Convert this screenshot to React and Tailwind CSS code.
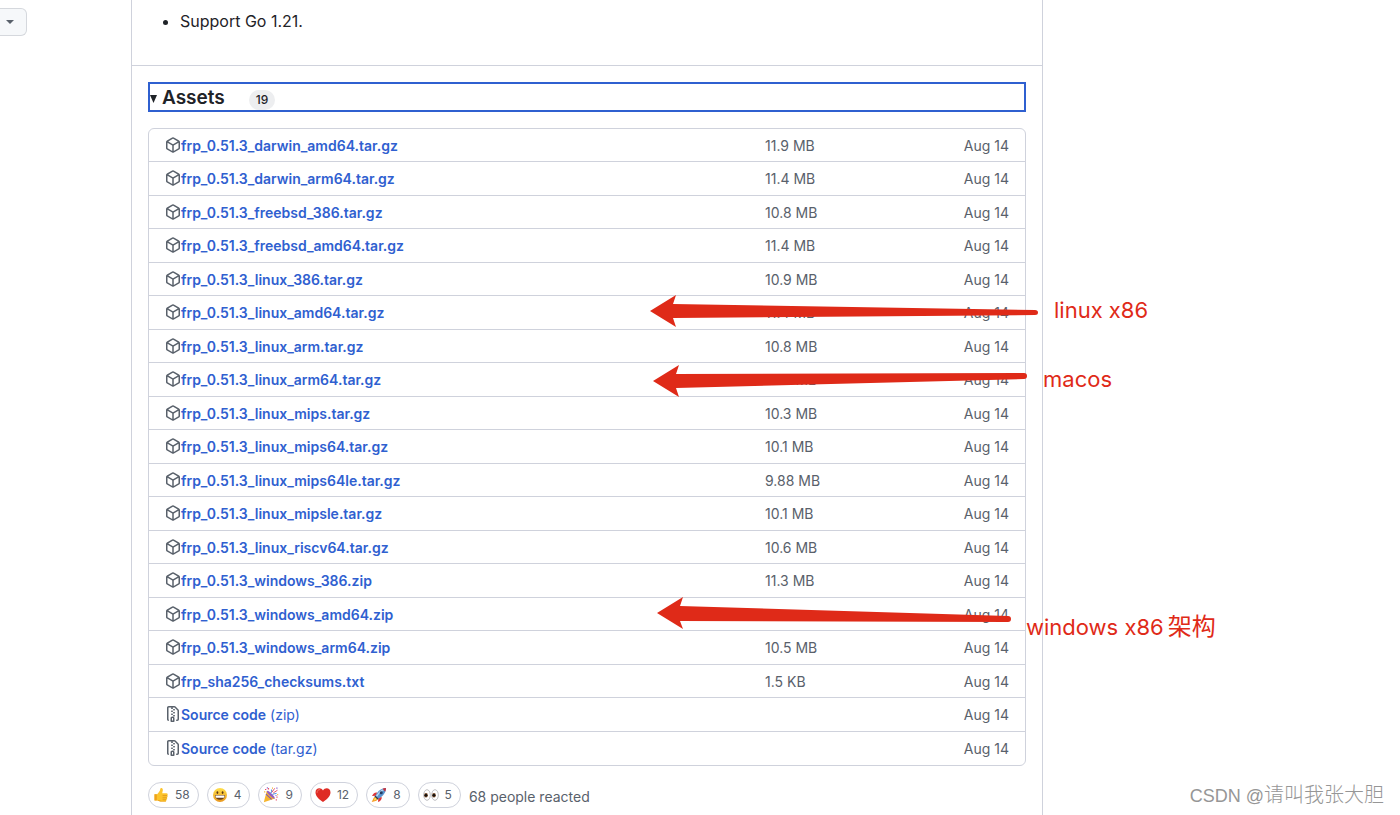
import React from "react";

const assets = [
  { name: "frp_0.51.3_darwin_amd64.tar.gz", size: "11.9 MB" },
  { name: "frp_0.51.3_darwin_arm64.tar.gz", size: "11.4 MB" },
  { name: "frp_0.51.3_freebsd_386.tar.gz", size: "10.8 MB" },
  { name: "frp_0.51.3_freebsd_amd64.tar.gz", size: "11.4 MB" },
  { name: "frp_0.51.3_linux_386.tar.gz", size: "10.9 MB" },
  { name: "frp_0.51.3_linux_amd64.tar.gz", size: "11.4 MB" },
  { name: "frp_0.51.3_linux_arm.tar.gz", size: "10.8 MB" },
  { name: "frp_0.51.3_linux_arm64.tar.gz", size: "10.5 MB" },
  { name: "frp_0.51.3_linux_mips.tar.gz", size: "10.3 MB" },
  { name: "frp_0.51.3_linux_mips64.tar.gz", size: "10.1 MB" },
  { name: "frp_0.51.3_linux_mips64le.tar.gz", size: "9.88 MB" },
  { name: "frp_0.51.3_linux_mipsle.tar.gz", size: "10.1 MB" },
  { name: "frp_0.51.3_linux_riscv64.tar.gz", size: "10.6 MB" },
  { name: "frp_0.51.3_windows_386.zip", size: "11.3 MB" },
  { name: "frp_0.51.3_windows_amd64.zip", size: "" },
  { name: "frp_0.51.3_windows_arm64.zip", size: "10.5 MB" },
  { name: "frp_sha256_checksums.txt", size: "1.5 KB" },
  { name: "Source code", format: "(zip)", size: "" },
  { name: "Source code", format: "(tar.gz)", size: "" },
];

const PackageIcon = () => (
  <svg viewBox="0 0 16 16" className="w-4 h-4 mb-0.5 shrink-0 fill-[#59616b]" aria-hidden="true">
    <path d="m8.878.392 5.25 3.045c.54.314.872.89.872 1.514v6.098a1.75 1.75 0 0 1-.872 1.514l-5.25 3.045a1.75 1.75 0 0 1-1.756 0l-5.25-3.045A1.75 1.75 0 0 1 1 11.049V4.951c0-.624.332-1.201.872-1.514L7.122.392a1.75 1.75 0 0 1 1.756 0ZM7.875 1.69l-4.63 2.685L8 7.133l4.755-2.758-4.63-2.685a.248.248 0 0 0-.25 0ZM2.5 5.677v5.372c0 .09.047.171.125.216l4.625 2.683V8.432Zm6.25 8.271 4.625-2.683a.25.25 0 0 0 .125-.216V5.677L8.75 8.432Z" />
  </svg>
);

const ZipIcon = () => (
  <svg viewBox="0 0 16 16" className="w-4 h-4 mb-0.5 shrink-0 fill-[#59616b]" aria-hidden="true">
    <path d="M3.5 1.75v11.5c0 .09.048.173.126.217a.75.75 0 0 1-.752 1.298A1.748 1.748 0 0 1 2 13.25V1.75C2 .784 2.784 0 3.75 0h5.586c.464 0 .909.185 1.237.513l2.914 2.914c.329.328.513.773.513 1.237v8.586A1.75 1.75 0 0 1 12.25 15h-.5a.75.75 0 0 1 0-1.5h.5a.25.25 0 0 0 .25-.25V4.664a.25.25 0 0 0-.073-.177L9.513 1.573a.25.25 0 0 0-.177-.073H7.25a.75.75 0 0 1 0 1.5h-.5a.75.75 0 0 1 0-1.5h-3a.25.25 0 0 0-.25.25Zm3.75 8.75h.5c.966 0 1.75.784 1.75 1.75v3a.75.75 0 0 1-.75.75h-2.5a.75.75 0 0 1-.75-.75v-3c0-.966.784-1.75 1.75-1.75ZM6 5.25a.75.75 0 0 1 .75-.75h.5a.75.75 0 0 1 0 1.5h-.5A.75.75 0 0 1 6 5.25Zm.75 2.25h.5a.75.75 0 0 1 0 1.5h-.5a.75.75 0 0 1 0-1.5ZM8 6.75A.75.75 0 0 1 8.75 6h.5a.75.75 0 0 1 0 1.5h-.5A.75.75 0 0 1 8 6.75ZM8.75 3h.5a.75.75 0 0 1 0 1.5h-.5a.75.75 0 0 1 0-1.5ZM8 9.75A.75.75 0 0 1 8.75 9h.5a.75.75 0 0 1 0 1.5h-.5A.75.75 0 0 1 8 9.75Zm-1 2.5v2.25h1v-2.25a.25.25 0 0 0-.25-.25h-.5a.25.25 0 0 0-.25.25Z" />
  </svg>
);

const ThumbsUp = () => (
  <svg viewBox="0 0 16 16" className="w-4 h-4" aria-hidden="true">
    <path d="M1.5 7.2h2.6c.9-.7 2.1-2.3 2.8-3.7.4-.9.2-2.3 1.2-2.5 1.3-.2 1.9 1.1 1.7 2.5-.1 1-.6 2-.6 2.7h4.2c1.5 0 1.8 1.9.6 2.3.9.5.8 1.9-.2 2.2.7.6.4 1.8-.5 2 .3.9-.3 1.8-1.4 1.8H7.5c-1.4 0-2.2-.6-3.4-.9H1.5Z" fill="#fcc42c" />
    <path d="M10 8.6h4M9.9 10.8h3.6M10 12.8h2.7" stroke="#d98d14" strokeWidth=".7" strokeLinecap="round" />
    <path d="M1.5 7.2h2.3v6.4H1.5ZM4 13.3c1.3.3 2 1.2 3.5 1.2h4.4c.6 0 1-.3 1.3-.6-2.5.4-5.5.2-7-.8Z" fill="#eda21d" />
  </svg>
);

const Grin = () => (
  <svg viewBox="0 0 16 16" className="w-4 h-4" aria-hidden="true">
    <defs>
      <linearGradient id="face" x1="0" y1="0" x2="0" y2="1">
        <stop offset="0" stopColor="#ffe04a" />
        <stop offset="1" stopColor="#e8971f" />
      </linearGradient>
    </defs>
    <circle cx="8" cy="8" r="7" fill="url(#face)" />
    <ellipse cx="5.4" cy="5.6" rx=".9" ry="1.3" fill="#5c3614" />
    <ellipse cx="10.6" cy="5.6" rx=".9" ry="1.3" fill="#5c3614" />
    <path d="M3 8h10c0 3-2 4.700-5 4.700S3 11 3 8Z" fill="#69401c" />
    <path d="M3.5 8.400h9c0 1-.2 1.700-.7 2.400H4.200c-.5-.7-.7-1.400-.7-2.400Z" fill="#fff" />
  </svg>
);

const Party = () => (
  <svg viewBox="0 0 16 16" className="w-4 h-4" aria-hidden="true">
    <path d="M3.7 4 .8 15.3 12 11.5Z" fill="#f5b52e" />
    <path d="m3 7.2 5.600 5.2" stroke="#8352b5" strokeWidth="1.1" />
    <ellipse cx="7.8" cy="7.7" rx="1.3" ry="5.3" transform="rotate(-45 7.8 7.7)" fill="#9560c2" />
    <path d="M7.5 6c1.800-1.100 1.400-2.400.7-3.300M9.500 7.800c1.300-2 2.700-.2 4-1.600" stroke="#5598df" strokeWidth="1.100" fill="none" />
    <path d="m9 5.200 2.700-3.900M10.300 5.900l4.200-2.700" stroke="#e65970" strokeWidth="1" />
    <path d="M2 2.5h1.300M5.500 1v1.400M14 9.500v1.300M12.700 12.800h1.200" stroke="#e8506a" strokeWidth="1.200" />
    <path d="M3.800.8h1.100M13.300 1.200h1.200M12.500 8.500h1" stroke="#8560d2" strokeWidth="1.200" />
    <path d="M1.100 4.800h1.200M9 1.200h1M14.200 7.600h1" stroke="#f3b52e" strokeWidth="1.200" />
  </svg>
);

const Heart = () => (
  <svg viewBox="0 0 16 16" className="w-4 h-4" aria-hidden="true">
    <path d="M8 15C4.300 12.400.5 9.100.5 5.400.5.700 6.100 0 8 3.600 9.900 0 15.500.7 15.500 5.400 15.500 9.100 11.700 12.400 8 15Z" fill="#df2c25" />
    <path d="M2.100 5.400c0-1.900 1.200-2.800 2.600-2.800" stroke="#f4756b" strokeWidth=".9" fill="none" strokeLinecap="round" />
  </svg>
);

const Rocket = () => (
  <svg viewBox="0 0 16 16" className="w-4 h-4" aria-hidden="true">
    <path d="M4.400 9.800C2.200 10 2.800 12 .7 14.900c3.100-.9 5.300-.5 5.700-3Z" fill="#f59a23" />
    <path d="M4.500 10.800c-1.100.2-1.100 1.300-1.900 2.500 1.500-.4 2.700-.4 3-1.400Z" fill="#fce256" />
    <path d="M6.300 5.500C3.800 5 2 6.600 1 9.100l3.800-.4ZM10.600 9.700c.6 2.400-1 4.300-3.600 5.300l.4-3.900Z" fill="#dc3438" />
    <path d="M4.200 9.500C6 5.200 8.800 1.500 15 1c-.3 5.900-4.100 9-8.500 10.900Z" fill="#5894cf" />
    <path d="M5.500 9.400C7.500 6 9.600 3.300 13.500 2.300" stroke="#c1daf0" strokeWidth="1.300" fill="none" />
    <path d="M11.500 1.700C12.500 1.200 13.600 1 15 1c-.1 1.500-.3 2.700-.8 3.700Z" fill="#c82d37" />
    <circle cx="10.200" cy="5.800" r="1.500" fill="#263c61" />
    <path d="m3.800 8.900 3.400 3.300" stroke="#333b49" strokeWidth="1.300" />
  </svg>
);

const Eyes = () => (
  <svg viewBox="0 0 16 16" className="w-4 h-4" aria-hidden="true">
    <g fill="#fff" stroke="#a3a4a8" strokeWidth=".7">
      <ellipse cx="4" cy="8" rx="3.300" ry="5.300" />
      <ellipse cx="12" cy="8" rx="3.300" ry="5.300" />
    </g>
    <ellipse cx="3" cy="8.300" rx="1.800" ry="2.300" fill="#704321" />
    <ellipse cx="11" cy="8.300" rx="1.800" ry="2.300" fill="#704321" />
    <circle cx="2.900" cy="8.200" r="1.300" fill="#111" />
    <circle cx="10.900" cy="8.200" r="1.300" fill="#111" />
  </svg>
);

const reactions = [
  { label: "thumbs up", count: 58, Icon: ThumbsUp },
  { label: "laugh", count: 4, Icon: Grin },
  { label: "hooray", count: 9, Icon: Party },
  { label: "heart", count: 12, Icon: Heart },
  { label: "rocket", count: 8, Icon: Rocket },
  { label: "eyes", count: 5, Icon: Eyes },
];

const App = () => {
  return (
    <div className="relative min-h-screen overflow-hidden bg-white text-[#1f2328] font-['Inter','Noto_Sans_CJK_SC',sans-serif] grid grid-cols-[131px_1fr_357px]">
      {/* Compare dropdown */}
      <aside>
        <button
          aria-label="Compare"
          className="flex items-center justify-center mt-2 w-[27px] h-7 pr-1.5 rounded-r-md border border-l-0 border-[#d5d8dd] bg-[#f6f8fa]"
        >
          <svg viewBox="0 0 8 4" className="w-2 h-1 fill-[#59616b]" aria-hidden="true">
            <path d="M0 0h8L4 4Z" />
          </svg>
        </button>
      </aside>

      {/* Release card */}
      <main className="border-x border-[#cfd2dc]">
        <div className="h-[66px] px-4 pt-2 border-b border-[#cfd2dc]">
          <ul className="list-disc pl-8 text-base leading-[26px]">
            <li>Support Go 1.21.</li>
          </ul>
        </div>

        <div className="p-4 pb-2">
          <details open>
            <summary className="flex items-center h-[30px] pt-0.5 mb-4 border-2 border-[#2f60d0] cursor-pointer list-none">
              <svg viewBox="0 0 8 8" className="w-2 h-2 mt-0.5 mr-1 fill-[#1f2328]" aria-hidden="true">
                <path d="M0 0h7L3.500 8Z" />
              </svg>
              <span className="text-[19px] leading-6 font-semibold">Assets</span>
              <span className="ml-6 mt-1 px-[7px] rounded-full bg-[#edeef0] text-xs leading-5 font-medium">19</span>
            </summary>

            <div className="rounded-md border border-[#cfd2dc]">
              <table className="w-full table-fixed border-separate border-spacing-0 text-sm leading-5">
                <tbody>
                  {assets.map((asset) => (
                    <tr
                      key={asset.name + (asset.format || "")}
                      className="odd:h-[33px] even:h-[34px] *:border-b *:border-[#cfd2dc] last:*:border-b-0 *:p-0 *:pt-[7px] *:align-top"
                    >
                      <td>
                        <div className="flex items-center pl-4">
                          {asset.format ? <ZipIcon /> : <PackageIcon />}
                          <a href="#" className="text-[#2f60d0]">
                            <span className="font-semibold">{asset.name}</span>
                            {asset.format && <span> {asset.format}</span>}
                          </a>
                        </div>
                      </td>
                      <td className="w-[160px] text-[#59616b]">{asset.size}</td>
                      <td className="w-[100px] text-right text-[#59616b]">
                        <span className="mr-4">Aug 14</span>
                      </td>
                    </tr>
                  ))}
                </tbody>
              </table>
            </div>
          </details>

          {/* Reactions */}
          <div className="flex items-center gap-2 mt-4 text-[#59616b]">
            {reactions.map(({ label, count, Icon }) => (
              <button
                key={label}
                aria-label={label}
                className="flex items-center gap-1.5 h-[26px] pl-1 pr-2 rounded-full border border-[#cfd2dc] text-xs"
              >
                <Icon />
                {count}
              </button>
            ))}
            <span className="pt-1 text-sm leading-5">68 people reacted</span>
          </div>
        </div>
      </main>

      {/* Hand-drawn notes over the card */}
      <svg viewBox="0 0 388 32" className="absolute top-[295px] right-[362px] w-[388px] h-8 fill-[#df2a18]" aria-hidden="true">
        <path d="M0 16 26 0 23 9 385 15Q388 15 388 17.500 388 20 385 20L23 23 26 32Z" />
      </svg>
      <span className="absolute top-[294px] left-[1054px] text-[22px] leading-8 text-[#df2a18]">linux x86</span>

      <svg viewBox="0 0 374 32" className="absolute top-[365px] right-[373px] w-[374px] h-8 fill-[#df2a18]" aria-hidden="true">
        <path d="M0 16 26 0 23 9 371 8Q374 8 374 11 374 14 371 14L23 23 26 32Z" />
      </svg>
      <span className="absolute top-[363px] left-[1043px] text-[22px] leading-8 text-[#df2a18]">macos</span>

      <svg viewBox="0 0 355 32" className="absolute top-[597px] right-[388px] w-[355px] h-8 fill-[#df2a18]" aria-hidden="true">
        <path d="M0 16 26 0 23 9 351 19Q354 19 354 22 354 25 351 25L23 24 26 32Z" />
      </svg>
      <span className="absolute top-[611px] left-[1026px] text-[22px] leading-8 text-[#df2a18]">
        windows x86<span className="ml-1 text-2xl leading-8">架构</span>
      </span>

      <span className="absolute bottom-1.5 right-4 font-['Liberation_Sans','Noto_Sans_CJK_SC',sans-serif] text-lg leading-7 text-[#969696]">
        CSDN @<span className="text-xl leading-7 font-light">请叫我张大胆</span>
      </span>
    </div>
  );
};

export default App;
